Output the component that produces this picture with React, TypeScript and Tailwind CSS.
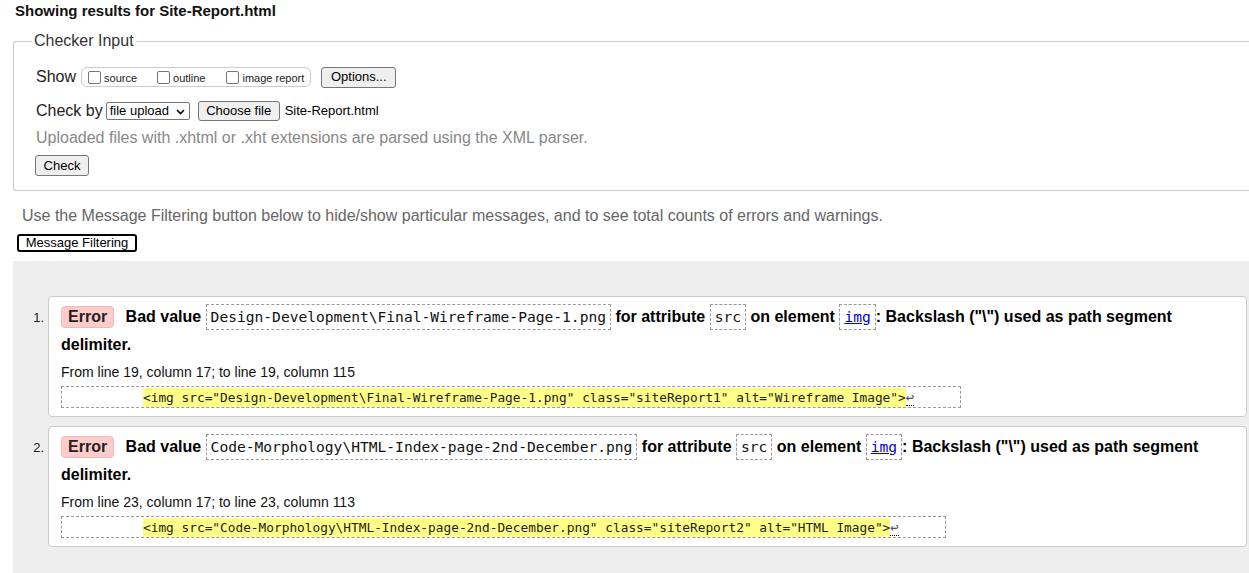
import React from 'react';

const mono = "font-['DejaVu_Sans_Mono',monospace]";

function Checkbox({ label }: { label: string }) {
  return (
    <span className="flex items-center gap-[3px]">
      <span className="inline-block w-[13px] h-[13px] rounded-[2px] border border-[#767676] bg-white" />
      <span className="text-[11px] leading-[13px] mt-[2px] text-[#222]">{label}</span>
    </span>
  );
}

function Btn({ children, className = '' }: { children: React.ReactNode; className?: string }) {
  return (
    <button
      className={`flex items-center justify-center rounded-[3px] border border-[#767676] bg-[#efefef] text-[13px] text-black ${className}`}
    >
      {children}
    </button>
  );
}

interface Msg {
  value: string;
  line: number;
  colFrom: number;
  colTo: number;
  extract: string;
}

const messages: Msg[] = [
  {
    value: 'Design-Development\\Final-Wireframe-Page-1.png',
    line: 19,
    colFrom: 17,
    colTo: 115,
    extract: '<img src="Design-Development\\Final-Wireframe-Page-1.png" class="siteReport1" alt="Wireframe Image">',
  },
  {
    value: 'Code-Morphology\\HTML-Index-page-2nd-December.png',
    line: 23,
    colFrom: 17,
    colTo: 113,
    extract: '<img src="Code-Morphology\\HTML-Index-page-2nd-December.png" class="siteReport2" alt="HTML Image">',
  },
];

function CodeBox({ children }: { children: React.ReactNode }) {
  return (
    <code
      className={`${mono} inline-block h-[26px] px-[4px] align-middle border border-dashed border-[#999] text-[14.6px] leading-[24px] font-normal text-[#111] -mt-[2px]`}
    >
      {children}
    </code>
  );
}

function Message({ m, n }: { m: Msg; n: number }) {
  return (
    <li className="flex mb-[9px]">
      <div className="w-[35px] shrink-0 pr-[4px] pt-[8px] text-right text-[13px] leading-[28px] text-[#222]">{n}.</div>
      <div className="flex-1 rounded-[4px] border border-[#ccc] bg-white px-[12px] pt-[6px] pb-[7px]">
        <p className="text-[16px] leading-[28px] font-bold text-black">
          <span className="inline-block h-[22px] leading-[20px] px-[6px] mr-[7px] rounded-[4px] border border-[#f2b8b8] bg-[#fcc] text-[#222] align-middle -mt-[2px]">
            Error
          </span>{' '}
          Bad value <CodeBox>{m.value}</CodeBox> for attribute <CodeBox>src</CodeBox> on element{' '}
          <CodeBox>
            <a href="#" className="text-[#00e] underline">img</a>
          </CodeBox>
          : Backslash ("\") used as path segment delimiter.
        </p>
        <p className="mt-[4px] text-[14px] leading-[18px] text-[#111]">
          From line {m.line}, column {m.colFrom}; to line {m.line}, column {m.colTo}
        </p>
        <div
          className={`${mono} mt-[5px] inline-block h-[22px] border border-dashed border-[#999] pl-[81px] pr-[46px] text-[12.8px] leading-[20px] text-[#222] whitespace-pre`}
        >
          <span className="bg-[#ff8] py-[2px]">{m.extract}</span>
          <span className="border-b border-dotted border-black text-[14px] text-[#555]">↩</span>
        </div>
      </div>
    </li>
  );
}

export default function App() {
  return (
    <div className="h-[573px] w-full overflow-hidden bg-white font-['Liberation_Sans',Arial,sans-serif] text-[#222]">
      <h2 className="mt-[2px] px-[15px] text-[15px] leading-[18px] font-bold text-[#111]">
        Showing results for Site-Report.html
      </h2>

      <fieldset className="mt-[12px] ml-[13px] border-y border-l border-[#ccc] rounded-l-[3px] pl-[22px] pt-[15px] pb-[14px]">
        <legend className="-ml-[4px] px-[2px] text-[16px] leading-[18px] text-[#333]">Checker Input</legend>

        <div className="flex items-center h-[24px]">
          <span className="text-[16px] leading-[18px] mr-[5px]">Show</span>
          <div className="flex items-center h-[20px] rounded-[6px] border border-[#ccc] pl-[6px] pr-[6px]">
            <Checkbox label="source" />
            <span className="w-[20px]" />
            <Checkbox label="outline" />
            <span className="w-[21px]" />
            <Checkbox label="image report" />
          </div>
          <Btn className="ml-[10px] h-[21px] w-[75px]">Options...</Btn>
        </div>

        <div className="flex items-center h-[24px] mt-[10px]">
          <span className="text-[16px] leading-[18px]">Check by</span>
          <div className="ml-[3px] flex items-center justify-between h-[18px] w-[84px] rounded-[2px] border border-[#767676] bg-white pl-[3px] pr-[4px] text-[13px] text-black">
            <span>file upload</span>
            <svg width="9" height="6" viewBox="0 0 9 6" className="mt-[1px]">
              <path d="M1 1 L4.5 4.5 L8 1" stroke="#000" strokeWidth="1.6" fill="none" />
            </svg>
          </div>
          <Btn className="ml-[8px] h-[20px] w-[82px]">Choose file</Btn>
          <span className="ml-[5px] text-[13px] text-black">Site-Report.html</span>
        </div>

        <p className="mt-[6px] text-[16px] leading-[18px] text-[#888]">
          Uploaded files with .xhtml or .xht extensions are parsed using the XML parser.
        </p>

        <Btn className="mt-[8px] -ml-[1px] h-[21px] w-[54px]">Check</Btn>
      </fieldset>

      <p className="mt-[16px] pl-[22px] text-[16px] leading-[18px] text-[#666]">
        Use the Message Filtering button below to hide/show particular messages, and to see total counts of errors and warnings.
      </p>
      <button className="mt-[9px] ml-[17px] flex items-center justify-center h-[18px] w-[120px] rounded-[3px] border-2 border-black bg-white text-[13px] leading-[14px] text-black">
        Message Filtering
      </button>

      <div className="mt-[9px] ml-[13px] h-[400px] bg-[#eee] pt-[35px] pr-[2px]">
        <ol>
          {messages.map((m, i) => (
            <Message key={i} m={m} n={i + 1} />
          ))}
        </ol>
      </div>
    </div>
  );
}
